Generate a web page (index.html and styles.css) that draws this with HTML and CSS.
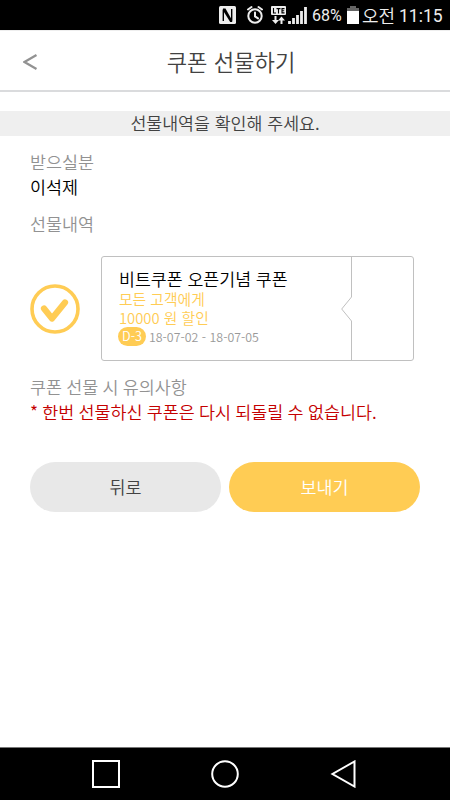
FILE: index.html
```html
<!DOCTYPE html>
<html lang="ko">
<head>
<meta charset="utf-8">
<title>쿠폰 선물하기</title>
<link rel="stylesheet" href="styles.css">
</head>
<body>
<div class="status">
  <svg class="status-icons" width="90" height="30" viewBox="0 0 90 30">
    <rect x="1" y="6" width="17" height="18" rx="1.500" fill="#eee"/>
    <path d="M5.300 21V9.500M13.700 9v11.500" fill="none" stroke="#000" stroke-width="1.400"/>
    <path d="M5 8.500h2.500l6.700 12V22h-2L5 10.500z" fill="#000"/>
    <g fill="none" stroke="#eee" stroke-width="2" stroke-linecap="round">
      <circle cx="37" cy="16" r="6.700"/>
      <path d="M30 9.500l3.500-2.500M44 9.500l-3.500-2.500M37 12.500v3.900l3 2"/>
    </g>
    <rect x="53" y="6" width="15" height="9" rx="1" fill="#eee"/>
    <path d="M55.500 8v5h2.500M58.500 8.600h4M60.500 8.600v4.900M66.500 8.600h-2.500v4.300h2.500M64 10.700h2.200" fill="none" stroke="#000" stroke-width="1.100"/>
    <path d="M57.500 16v5M63.500 24v-5" stroke="#eee" stroke-width="2"/>
    <path d="M54 20h7l-3.500 4zM60 20.500l3.500-4 3.500 4z" fill="#eee"/>
    <path d="M71 24v-3M75 24v-6M79 24v-9M83 24V11M87 24V7" transform="translate(.5 0)" stroke="#eee" stroke-width="2.800"/>
  </svg>
  <span class="percent">68%</span>
  <svg class="battery" width="12" height="18" viewBox="0 0 12 18">
    <path d="M3 0h6v2h3v4H0V2h3z" fill="#666"/>
    <path d="M0 5h12v13H0z" fill="#fff"/>
  </svg>
  <span class="meridiem">오전</span>
  <span class="clock">11:15</span>
</div>
<header class="header">
  <svg class="back" width="15" height="18" viewBox="0 0 15 18"><path d="M13.500 2L1.500 9l12 7" fill="none" stroke="#929292" stroke-width="2.200"/></svg>
  <h1 class="title">쿠폰 선물하기</h1>
</header>
<main class="main">
  <p class="notice">선물내역을 확인해 주세요.</p>
  <div class="content">
    <p class="label">받으실분</p>
    <p class="name">이석제</p>
    <p class="label gift-label">선물내역</p>
    <div class="gift">
      <svg class="check" width="50" height="50" viewBox="0 0 50 50" fill="none" stroke="#ffcc54">
        <circle cx="25" cy="25" r="23" stroke-width="3.600"/>
        <path d="M14 24.500l8 10L35 18.500" stroke-width="6.200" stroke-linecap="round" stroke-linejoin="round"/>
      </svg>
      <section class="coupon">
        <div class="coupon-body">
          <h2 class="coupon-title">비트쿠폰 오픈기념 쿠폰</h2>
          <p class="benefit">모든 고객에게</p>
          <p class="benefit">10000 원 할인</p>
          <p class="period"><span class="dday">D-3</span><span>18-07-02 - 18-07-05</span></p>
        </div>
        <svg class="divider" width="12" height="103" viewBox="0 0 12 103"><path d="M10.500 0V40L.7 52l9.800 12v39" fill="none" stroke="#c0c0c0"/></svg>
      </section>
    </div>
    <p class="label tight">쿠폰 선물 시 유의사항</p>
    <p class="warning tight">* 한번 선물하신 쿠폰은 다시 되돌릴 수 없습니다.</p>
    <div class="actions">
      <button class="button">뒤로</button>
      <button class="button send">보내기</button>
    </div>
  </div>
</main>
<nav class="nav">
  <svg width="28" height="28" viewBox="0 0 28 28"><rect x="1" y="1" width="26" height="26"/></svg>
  <svg width="28" height="28" viewBox="0 0 28 28"><circle cx="14" cy="14" r="12.800"/></svg>
  <svg width="28" height="28" viewBox="0 0 28 28"><path d="M24.500 1.500v25L2.500 14z"/></svg>
</nav>
</body>
</html>
```
FILE: styles.css
```css
* {
  box-sizing: border-box;
}

body {
  display: flex;
  flex-direction: column;
  height: 800px;
  margin: 0;
  overflow: hidden;
  background: #fff;
  color: #424242;
  font: 350 17.4px/25px "Noto Sans CJK KR DemiLight", "Noto Sans CJK KR", sans-serif;
  white-space: nowrap;
}

h1, h2, p {
  margin: 0;
  font-weight: 350;
}

svg {
  display: block;
  flex: none;
}

.status {
  display: flex;
  flex: none;
  align-items: center;
  height: 30px;
  padding-left: 218px;
  background: #000;
  color: #eee;
  font: 400 17.5px/30px Roboto, sans-serif;
}

.percent {
  width: 35px;
  padding: 2px 0 0 4px;
  font-size: 16px;
}

.battery {
  margin-left: 4px;
}

.meridiem {
  width: 36px;
  margin-left: 3px;
  font: 350 18px/30px "Noto Sans CJK KR DemiLight", "Noto Sans CJK KR", sans-serif;
}

.clock {
  padding: 2px 0 0 1px;
  font-size: 17.5px;
}

.header {
  display: grid;
  grid-template-columns: 60px 1fr 48px;
  flex: none;
  align-items: center;
  height: 62px;
  border-top: 1px solid #eee;
  border-bottom: 2px solid #dadbdd;
}

.back {
  margin: 2px 0 0 23px;
}

.title {
  font-size: 22.2px;
  line-height: 32px;
  text-align: center;
}

.main {
  flex: 1;
  padding-top: 19px;
}

.notice {
  height: 25px;
  background: #efefef;
  font-size: 17.3px;
  line-height: 24px;
  text-align: center;
}

.content {
  padding: 13px 30px 0;
}

.label {
  color: #929292;
}

.name {
  color: #000;
  font-weight: 400;
}

.gift-label {
  margin-top: 12px;
}

.gift {
  display: flex;
  align-items: center;
  gap: 21px;
  margin: 20px 0 13px;
}

.coupon {
  display: flex;
  width: 313px;
  height: 105px;
  border: 1px solid #c0c0c0;
  border-radius: 3px;
}

.coupon-body {
  width: 239px;
  padding: 11px 0 0 17px;
}

.coupon-title {
  color: #000;
  font-size: 17.3px;
  font-weight: 400;
  line-height: 22px;
}

.benefit {
  color: #ffcc54;
  font-size: 14.8px;
  line-height: 19px;
}

.coupon-title + .benefit {
  margin-top: -1px;
}

.period {
  display: flex;
  align-items: center;
  gap: 3px;
  color: #999;
  font-size: 12.4px;
  line-height: 18px;
}

.dday {
  width: 28px;
  height: 19px;
  margin-left: -1px;
  border-radius: 10px;
  background: #ffcc54;
  color: #fff;
  font-size: 12.6px;
  font-weight: 400;
  text-align: center;
}

.warning {
  color: #c40000;
}

.tight {
  word-spacing: -.6px;
}

.actions {
  display: flex;
  gap: 8px;
  margin-top: 38px;
}

.button {
  flex: 1;
  height: 50px;
  padding: 0 0 1px;
  border: 0;
  border-radius: 25px;
  background: #e8e8e8;
  color: #424242;
  font: inherit;
}

.send {
  background: #ffcc54;
  color: #fff;
}

.nav {
  display: flex;
  flex: none;
  align-items: center;
  justify-content: space-between;
  height: 53px;
  padding: 0 92px;
  border-top: 1px solid #777;
  background: #000;
  fill: none;
  stroke: #fff;
  stroke-width: 2;
}
```
